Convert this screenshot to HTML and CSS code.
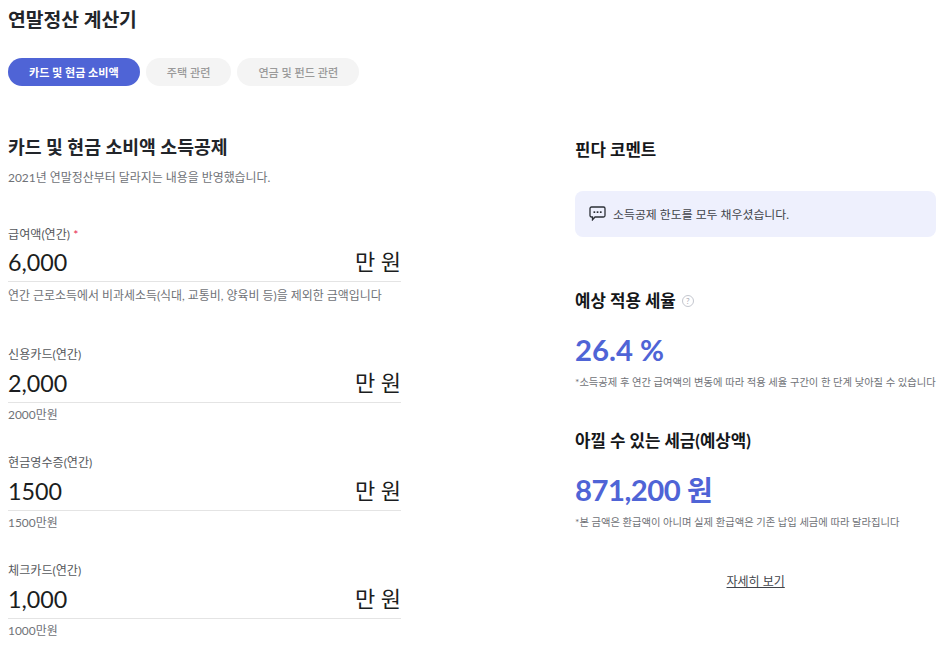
FILE: index.html
```html
<!DOCTYPE html>
<html lang="ko">
<head>
  <meta charset="UTF-8" />
  <title>연말정산 계산기</title>
  <link rel="stylesheet" href="styles.css">
</head>
<body>
  <h1 class="page-title">연말정산 계산기</h1>

  <div class="tabs">
    <button class="tab tab-active">카드 및 현금 소비액</button>
    <button class="tab">주택 관련</button>
    <button class="tab">연금 및 펀드 관련</button>
  </div>

  <div class="calc">
    <div class="calc-form">
      <h2 class="form-title">카드 및 현금 소비액 소득공제</h2>
      <p class="form-desc">2021년 연말정산부터 달라지는 내용을 반영했습니다.</p>

      <div class="field field-first">
        <label class="field-label">급여액(연간) <span class="required">*</span></label>
        <div class="field-input">
          <span class="field-value">6,000</span>
          <span class="field-unit">만 원</span>
        </div>
        <p class="field-help">연간 근로소득에서 비과세소득(식대, 교통비, 양육비 등)을 제외한 금액입니다</p>
      </div>

      <div class="field field-second">
        <label class="field-label">신용카드(연간)</label>
        <div class="field-input">
          <span class="field-value">2,000</span>
          <span class="field-unit">만 원</span>
        </div>
        <p class="field-help">2000만원</p>
      </div>

      <div class="field">
        <label class="field-label">현금영수증(연간)</label>
        <div class="field-input">
          <span class="field-value">1500</span>
          <span class="field-unit">만 원</span>
        </div>
        <p class="field-help">1500만원</p>
      </div>

      <div class="field">
        <label class="field-label">체크카드(연간)</label>
        <div class="field-input">
          <span class="field-value">1,000</span>
          <span class="field-unit">만 원</span>
        </div>
        <p class="field-help">1000만원</p>
      </div>
    </div>

    <div class="calc-result">
      <h3 class="result-title comment-title">핀다 코멘트</h3>
      <div class="comment-box">
        <svg class="comment-icon" width="17" height="15" viewBox="0 0 17 15" fill="none">
          <path d="M2.500 1h12A1.500 1.500 0 0 1 16 2.500v7a1.500 1.500 0 0 1-1.500 1.500H6l-2.500 2.800V11h-1A1.500 1.500 0 0 1 1 9.500v-7A1.500 1.500 0 0 1 2.500 1z" stroke="#2b2f36" stroke-width="1.300"/>
          <rect x="4.500" y="5.300" width="1.700" height="1.700" fill="#2b2f36"/>
          <rect x="7.700" y="5.300" width="1.700" height="1.700" fill="#2b2f36"/>
          <rect x="10.900" y="5.300" width="1.700" height="1.700" fill="#2b2f36"/>
        </svg>
        <span>소득공제 한도를 모두 채우셨습니다.</span>
      </div>

      <div class="result-heading">
        <h3 class="result-title">예상 적용 세율</h3>
        <span class="help-icon">?</span>
      </div>
      <div class="result-value">26.4 %</div>
      <p class="result-note">*소득공제 후 연간 급여액의 변동에 따라 적용 세율 구간이 한 단계 낮아질 수 있습니다</p>

      <h3 class="result-title save-title">아낄 수 있는 세금(예상액)</h3>
      <div class="result-value save-value">871,200 <span class="save-unit">원</span></div>
      <p class="result-note save-note">*본 금액은 환급액이 아니며 실제 환급액은 기존 납입 세금에 따라 달라집니다</p>

      <a class="more-link" href="#">자세히 보기</a>
    </div>
  </div>
</body>
</html>
```

FILE: styles.css
```css
:root {
  --primary: #4f64d6;
  --dark: #22252a;
  --gray: #6f7277;
  --line: #e4e4e4;
}

* {
  box-sizing: border-box;
}

html, body {
  height: 657px;
  overflow: hidden;
}

body {
  margin: 0;
  padding: 8px 10px 0 8px;
  background: white;
  color: var(--dark);
  font-family: Lato, "Noto Sans CJK KR", sans-serif;
}

.page-title {
  margin: 0;
  font-size: 19.300px;
  line-height: 24px;
  font-weight: 700;
}

.tabs {
  display: flex;
  gap: 6px;
  margin-top: 26px;
}

.tab {
  height: 28px;
  padding: 0 21px;
  border: none;
  border-radius: 14px;
  background: #f4f4f4;
  color: #9a9a9a;
  font-family: inherit;
  font-size: 11.100px;
  font-weight: 500;
}

.tab-active {
  background: var(--primary);
  color: white;
  font-weight: 700;
}

.calc {
  display: flex;
  justify-content: space-between;
  margin-top: 48px;
}

.calc-form {
  width: 393px;
}

.form-title {
  margin: 0;
  font-size: 18.300px;
  line-height: 26px;
  font-weight: 700;
}

.form-desc {
  margin: 9px 0 0;
  font-size: 11.950px;
  line-height: 18px;
  color: var(--gray);
}

.field {
  margin-top: 30px;
}

.field-first {
  margin-top: 39px;
}

.field-second {
  margin-top: 41px;
}

.field-label {
  display: block;
  font-size: 12.100px;
  line-height: 18px;
  color: #55585c;
}

.required {
  color: #e8264f;
}

.field-input {
  display: flex;
  justify-content: space-between;
  align-items: center;
  height: 39px;
  border-bottom: 1px solid var(--line);
  color: #1b1d20;
}

.field-first .field-input {
  height: 38px;
  padding-bottom: 1px;
}

.field-value {
  font-size: 23.300px;
  line-height: 34px;
}

.field-unit {
  font-size: 22px;
  line-height: 34px;
}

.field-help {
  margin: 3px 0 0;
  font-size: 11.950px;
  line-height: 18px;
  color: var(--gray);
}

.field-first .field-help {
  margin-top: 5px;
}

.calc-result {
  width: 361px;
}

.result-title {
  margin: 0;
  font-size: 16.800px;
  line-height: 24px;
  font-weight: 700;
  color: #15171a;
}

.comment-title {
  margin-top: 4px;
}

.comment-box {
  display: flex;
  align-items: center;
  gap: 7px;
  height: 46px;
  margin-top: 29px;
  padding: 0 0 1px 14px;
  border-radius: 8px;
  background: #eef0fd;
  font-size: 11.900px;
  color: #41444a;
}

.result-heading {
  display: flex;
  align-items: center;
  gap: 6px;
  margin-top: 52px;
}

.help-icon {
  display: flex;
  align-items: center;
  justify-content: center;
  width: 12px;
  height: 12px;
  border: 1px solid #c4c7cf;
  border-radius: 50%;
  font-size: 8px;
  color: #a9acb5;
}

.result-value {
  margin-top: 18px;
  font-size: 29.300px;
  line-height: 38px;
  font-weight: 700;
  color: var(--primary);
}

.result-note {
  margin: 5px 0 0;
  font-size: 10.300px;
  line-height: 16px;
  color: var(--gray);
  white-space: nowrap;
}

.save-title {
  margin-top: 39px;
}

.save-value {
  margin-top: 18px;
  letter-spacing: -0.500px;
}

.save-unit {
  font-size: 28px;
}

.save-note {
  margin-top: 5px;
}

.more-link {
  display: block;
  width: 58px;
  margin: 43px auto 0;
  font-size: 12px;
  line-height: 18px;
  white-space: nowrap;
  color: #41444a;
}
```
